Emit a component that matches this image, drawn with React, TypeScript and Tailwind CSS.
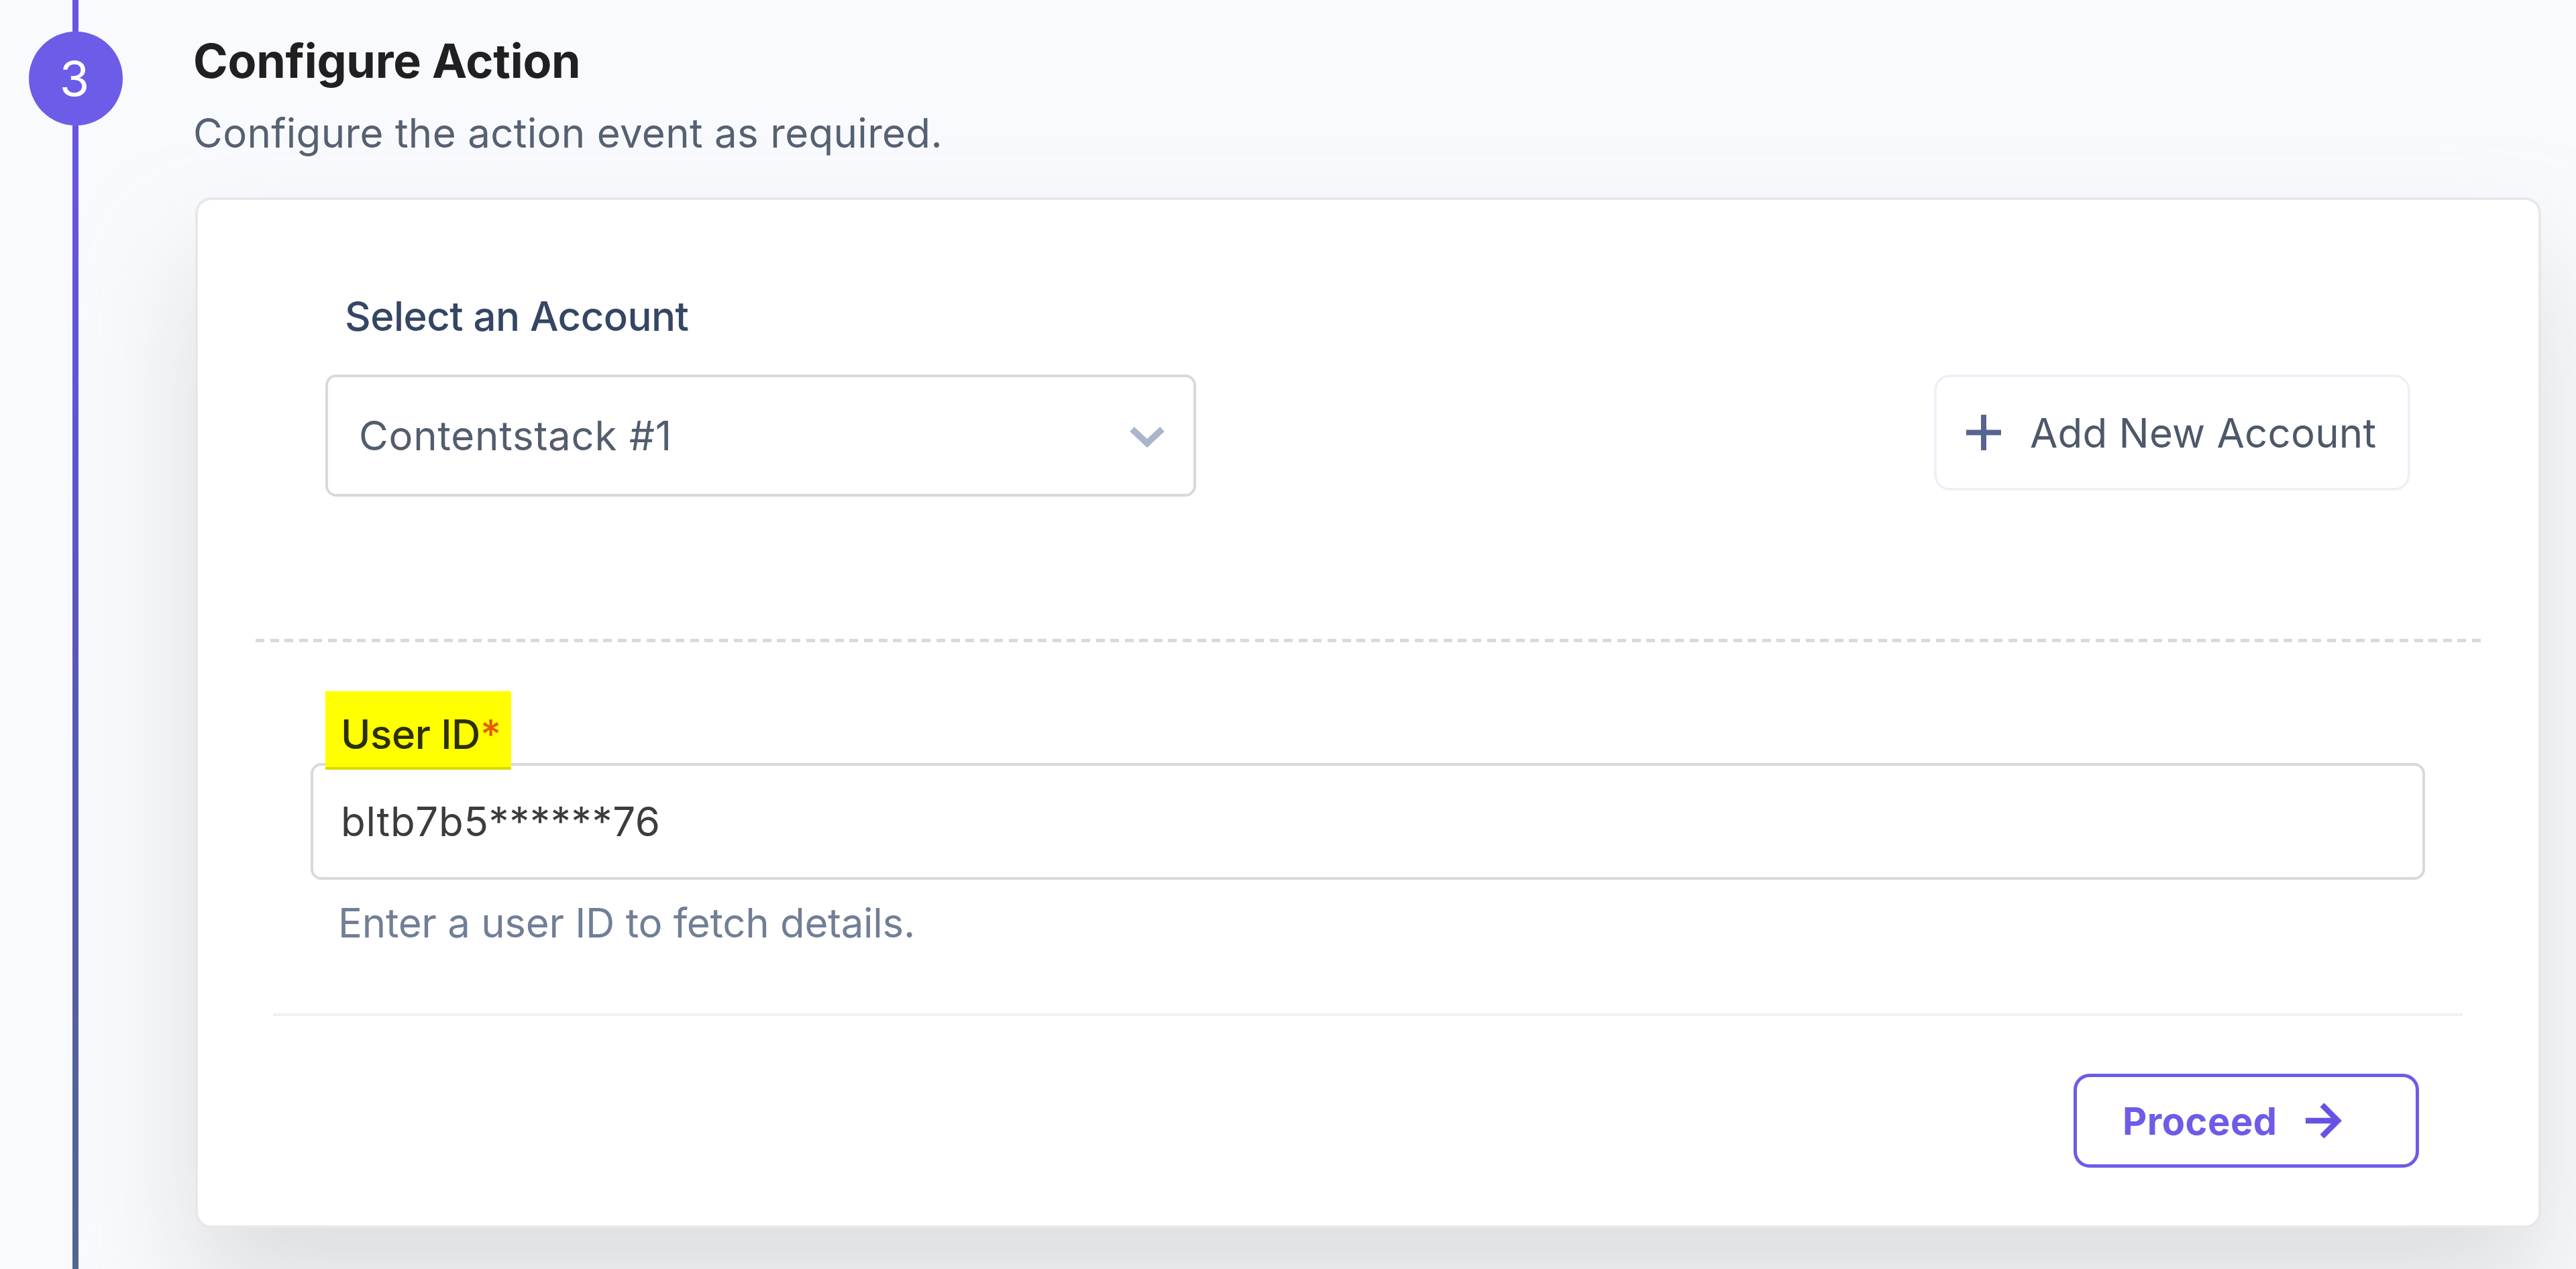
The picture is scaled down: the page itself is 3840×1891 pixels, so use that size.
function StepRail() {
  return (
    <div className="flex h-full w-[288px] shrink-0 flex-col pl-[43px]">
      <div className="ml-[65px] h-[47px] w-[9px] bg-[#6757df]" />
      <div className="flex size-[140px] shrink-0 items-center justify-center rounded-full bg-[#6c5ce7] text-[72px] leading-[84px] text-white">
        <span className="-ml-[4px]">3</span>
      </div>
      <div className="ml-[65px] w-[9px] flex-1 bg-[linear-gradient(180deg,#6656df_0%,#6355d8_20%,#5a58bd_43%,#555ea5_72%,#52688f_100%)]" />
    </div>
  );
}

function ChevronIcon() {
  return (
    <svg className="mt-[4px] h-[33px] w-[54px]" viewBox="0 0 54 33" fill="none">
      <path d="M4.5 4.5 27 25.5 49.5 4.5" stroke="#a8b5cb" strokeWidth="9.5" />
    </svg>
  );
}

function PlusIcon() {
  return (
    <svg className="h-[53px] w-[52px]" viewBox="0 0 52 53" fill="none">
      <path d="M26 0V53M0 26.5H52" stroke="#56658f" strokeWidth="8" />
    </svg>
  );
}

function ArrowIcon() {
  return (
    <svg className="size-[54px]" viewBox="0 0 54 54" fill="none">
      <path d="M0 27H48M24.5 3.5 48 27 24.5 50.5" stroke="#6553e4" strokeWidth="8.5" />
    </svg>
  );
}

function AccountRow() {
  return (
    <div className="ml-[190px] flex w-[3108px] items-start justify-between">
      <div className="flex h-[182px] w-[1298px] items-center justify-between rounded-[16px] border-4 border-[#d9d9d9] bg-white pr-[42px] pl-[46px]">
        <span className="text-[60px] leading-[72px] tracking-[0.75px] text-[#525d6d]">
          Contentstack #1
        </span>
        <ChevronIcon />
      </div>
      <button className="flex h-[173px] w-[710px] items-center gap-[43px] rounded-[24px] border-4 border-[#edf1f7] bg-white pl-[44px]">
        <PlusIcon />
        <span className="text-[60px] leading-[72px] tracking-[0.2px] whitespace-nowrap text-[#4d5868]">
          Add New Account
        </span>
      </button>
    </div>
  );
}

function UserIdField() {
  return (
    <div className="mt-[73px] flex flex-col items-start">
      <div className="relative z-10 -mb-[10px] ml-[190px] h-[117px] w-[277px] border-b-4 border-[#dada00] bg-[#ffff00] pt-[28px] pl-[23px] text-[60px] leading-[72px] font-medium whitespace-nowrap">
        <span className="tracking-[-0.4px] text-[#2b3000]">User ID</span>
        <span className="text-[#e65c00]">*</span>
      </div>
      <div className="ml-[168px] flex h-[174px] w-[3152px] items-center rounded-[16px] border-4 border-[#d9d9d9] bg-white pl-[41px] text-[60px] leading-[72px] tracking-[0.7px] text-[#3c3c3c]">
        bltb7b5******76
      </div>
      <p className="mt-[28px] ml-[209px] text-[60px] leading-[72px] tracking-[-0.3px] text-[#717e96]">
        Enter a user ID to fetch details.
      </p>
    </div>
  );
}

export default function App() {
  return (
    <div className="flex h-[1891px] w-[3840px] overflow-hidden bg-[#f8fafe] font-['Inter',sans-serif]">
      <StepRail />
      <main className="flex flex-col pt-[49px]">
        <h2 className="text-[70px] leading-[84px] font-bold tracking-[-0.26px] text-[#202020]">
          Configure Action
        </h2>
        <p className="mt-[29px] text-[60px] leading-[72px] tracking-[0.32px] text-[#566172]">
          Configure the action event as required.
        </p>
        <section className="mt-[60px] ml-[3px] h-[1536px] w-[3497px] rounded-[24px] border-4 border-[#e8e8e8] bg-white pt-[137px] shadow-[0_98px_160px_rgba(200,200,200,0.55)]">
          <label className="mb-[51px] ml-[219px] block text-[60px] leading-[72px] font-medium tracking-[-0.55px] text-[#344664]">
            Select an Account
          </label>
          <AccountRow />
          <div className="mt-[212px] ml-[86px] h-[5px] w-[3317px] bg-[repeating-linear-gradient(90deg,#d9d9d9_0px,#d9d9d9_13px,transparent_13px,transparent_21.595px)]" />
          <UserIdField />
          <div className="mt-[99px] ml-[112px] h-[4px] w-[3264px] bg-[#edf1f7]" />
          <button className="mt-[86px] ml-[2796px] flex h-[140px] w-[515px] items-center gap-[42px] rounded-[24px] border-[5px] border-[#6c5ce7] bg-white pl-[68px] text-[#6c5ce7]">
            <span className="mt-[2px] text-[56px] leading-[68px] font-bold tracking-[0.5px]">
              Proceed
            </span>
            <ArrowIcon />
          </button>
        </section>
      </main>
    </div>
  );
}
